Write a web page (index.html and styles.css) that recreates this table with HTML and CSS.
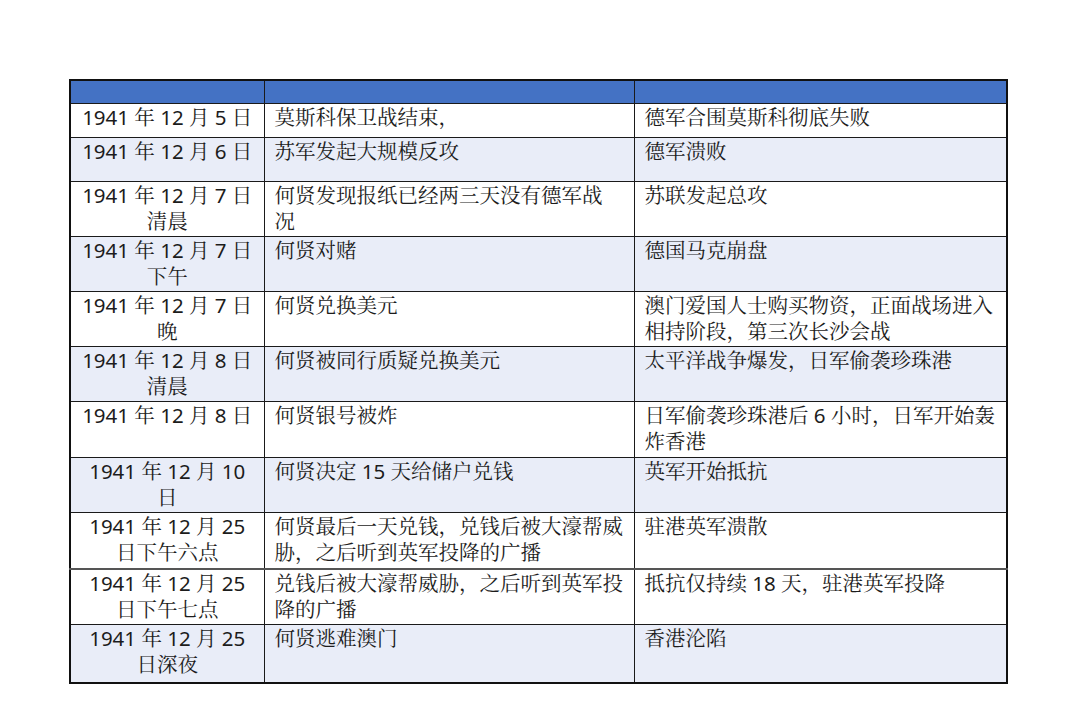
FILE: index.html
```html
<!DOCTYPE html>
<html lang="zh">
<head>
<meta charset="utf-8">
<link rel="stylesheet" href="styles.css">
</head>
<body>
<div class="page">
<table class="timeline">
  <colgroup><col class="c1"><col class="c2"><col class="c3"></colgroup>
  <thead>
    <tr class="head"><th></th><th></th><th></th></tr>
  </thead>
  <tbody>
    <tr class="h35"><td class="date">1941 年 12 月 5 日</td><td>莫斯科保卫战结束，</td><td>德军合围莫斯科彻底失败</td></tr>
    <tr class="h44 alt"><td class="date">1941 年 12 月 6 日</td><td>苏军发起大规模反攻</td><td>德军溃败</td></tr>
    <tr class="h55"><td class="date">1941 年 12 月 7 日<br>清晨</td><td>何贤发现报纸已经两三天没有德军战<br>况</td><td>苏联发起总攻</td></tr>
    <tr class="h55 alt"><td class="date">1941 年 12 月 7 日<br>下午</td><td>何贤对赌</td><td>德国马克崩盘</td></tr>
    <tr class="h55"><td class="date">1941 年 12 月 7 日<br>晚</td><td>何贤兑换美元</td><td>澳门爱国人士购买物资，正面战场进入<br>相持阶段，第三次长沙会战</td></tr>
    <tr class="h55 alt"><td class="date">1941 年 12 月 8 日<br>清晨</td><td>何贤被同行质疑兑换美元</td><td>太平洋战争爆发，日军偷袭珍珠港</td></tr>
    <tr class="h56"><td class="date">1941 年 12 月 8 日</td><td>何贤银号被炸</td><td>日军偷袭珍珠港后 6 小时，日军开始轰<br>炸香港</td></tr>
    <tr class="h55 alt"><td class="date">1941 年 12 月 10<br>日</td><td>何贤决定 15 天给储户兑钱</td><td>英军开始抵抗</td></tr>
    <tr class="h56"><td class="date">1941 年 12 月 25<br>日下午六点</td><td>何贤最后一天兑钱，兑钱后被大濠帮威<br>胁，之后听到英军投降的广播</td><td>驻港英军溃散</td></tr>
    <tr class="h56t thick"><td class="date">1941 年 12 月 25<br>日下午七点</td><td>兑钱后被大濠帮威胁，之后听到英军投<br>降的广播</td><td>抵抗仅持续 18 天，驻港英军投降</td></tr>
    <tr class="h58 alt"><td class="date">1941 年 12 月 25<br>日深夜</td><td>何贤逃难澳门</td><td>香港沦陷</td></tr>
  </tbody>
</table>
</div>
</body>
</html>
```

FILE: styles.css
```css
html, body {
  margin: 0;
  padding: 0;
  background: #ffffff;
}

.page {
  padding: 79px 0 0 69px;
}

.timeline {
  border-collapse: collapse;
  table-layout: fixed;
  width: 937px;
  border: 2px solid #111;
  font-family: "Noto Sans", "Noto Serif CJK SC", "Noto Sans CJK SC", sans-serif;
  font-size: 20.5px;
  line-height: 26px;
  color: #1c1c1c;
}

.c1 { width: 194px; }
.c2 { width: 370px; }
.c3 { width: 373px; }

.timeline th,
.timeline td {
  border: 1px solid #1a1a1a;
  padding: 0 0 0 10px;
  vertical-align: top;
  text-align: left;
  white-space: nowrap;
  overflow: hidden;
  font-weight: 400;
}

.head th {
  background: #4472c4;
  height: 22px;
  padding: 0;
}

.timeline td.date {
  text-align: center;
  padding: 0;
}

.timeline tbody tr {
  background: #ffffff;
}

.timeline tbody tr.alt {
  background: #e9edf8;
}

.h35 td { height: 33px; }
.h44 td { height: 43px; }
.h55 td { height: 54px; }
.h56 td { height: 55px; }
.h56t td { height: 54px; }
.h58 td { height: 57px; }

.thick td {
  border-top: 2px solid #555;
}
```
